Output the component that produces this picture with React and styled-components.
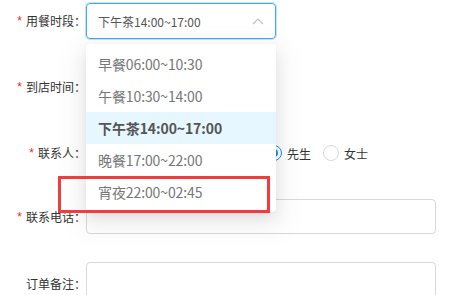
import React from 'react';
import styled, { createGlobalStyle } from 'styled-components';

const GlobalStyle = createGlobalStyle`
  html, body {
    margin: 0;
    padding: 0;
    background: #fff;
    font-family: "Noto Sans CJK SC", "Noto Sans", sans-serif;
  }
`;

const Page = styled.div`
  position: relative;
  width: 455px;
  height: 295px;
  overflow: hidden;
  padding-top: 3px;
  box-sizing: border-box;
`;

const Row = styled.div`
  display: flex;
  align-items: ${(p) => (p.$top ? 'flex-start' : 'center')};
  height: ${(p) => p.$h || 36}px;
  margin-bottom: ${(p) => (p.$mb != null ? p.$mb : 30)}px;
`;

const Label = styled.label`
  width: 86px;
  flex: none;
  display: flex;
  justify-content: flex-end;
  align-items: center;
  font-size: 12px;
  line-height: 16px;
  color: #333;
  padding-top: ${(p) => p.$pt || 0}px;
`;

const Star = styled.span`
  color: #f5222d;
  font-family: SimSun, "Liberation Sans", sans-serif;
  font-size: 12px;
  margin-right: 4px;
`;

const SelectWrap = styled.div`
  position: relative;
  width: 190px;
  height: 36px;
`;

const SelectBox = styled.div`
  box-sizing: border-box;
  height: 36px;
  border: 1px solid #40a9ff;
  border-radius: 4px;
  box-shadow: 0 0 0 1px rgba(24, 144, 255, 0.25);
  display: flex;
  align-items: center;
  justify-content: space-between;
  padding: 0 11px;
  font-size: 12px;
  color: #555;
`;

const Dropdown = styled.ul`
  position: absolute;
  top: 41px;
  left: 0;
  width: 190px;
  margin: 0;
  padding: 4px 0;
  list-style: none;
  background: #fff;
  border-radius: 4px;
  box-shadow: 0 3px 6px -4px rgba(0, 0, 0, 0.12), 0 6px 16px 0 rgba(0, 0, 0, 0.08),
    0 9px 28px 8px rgba(0, 0, 0, 0.05);
  z-index: 5;
`;

const Option = styled.li`
  height: 32px;
  line-height: 32px;
  padding: 0 12px;
  font-size: 14px;
  letter-spacing: -0.1px;
  color: ${(p) => (p.$active ? '#555' : '#777')};
  font-weight: ${(p) => (p.$active ? 600 : 400)};
  background: ${(p) => (p.$active ? '#e6f7ff' : 'transparent')};
  white-space: nowrap;
`;

const Input = styled.div`
  box-sizing: border-box;
  width: ${(p) => p.$w || 350}px;
  height: ${(p) => p.$h || 35}px;
  border: 1px solid #d9d9d9;
  border-radius: 4px;
  background: #fff;
`;

const RadioGroup = styled.div`
  display: flex;
  align-items: center;
  gap: 12px;
  margin-left: 4px;
`;

const Radio = styled.span`
  display: flex;
  align-items: center;
  gap: 5px;
  font-size: 12px;
  color: #333;
`;

const Circle = styled.span`
  box-sizing: border-box;
  width: 16px;
  height: 16px;
  border-radius: 50%;
  border: 1px solid ${(p) => (p.$on ? '#1890ff' : '#d9d9d9')};
  display: flex;
  align-items: center;
  justify-content: center;
  &::after {
    content: '';
    width: 8px;
    height: 8px;
    border-radius: 50%;
    background: ${(p) => (p.$on ? '#1890ff' : 'transparent')};
  }
`;

const Highlight = styled.div`
  position: absolute;
  left: 58px;
  top: 176px;
  width: 212px;
  height: 37px;
  box-sizing: border-box;
  border: 3px solid #f03c3c;
  z-index: 10;
`;

const options = [
  '早餐06:00~10:30',
  '午餐10:30~14:00',
  '下午茶14:00~17:00',
  '晚餐17:00~22:00',
  '宵夜22:00~02:45',
];

const Chevron = () => (
  <svg width="12" height="8" viewBox="0 0 12 8" fill="none">
    <path d="M1 7L6 2L11 7" stroke="#bfbfbf" strokeWidth="1.1" />
  </svg>
);

export default function App() {
  return (
    <Page>
      <GlobalStyle />
      <Row>
        <Label><Star>*</Star>用餐时段：</Label>
        <SelectWrap>
          <SelectBox>
            <span>下午茶14:00~17:00</span>
            <Chevron />
          </SelectBox>
          <Dropdown>
            {options.map((o, i) => (
              <Option key={o} $active={i === 2}>{o}</Option>
            ))}
          </Dropdown>
        </SelectWrap>
      </Row>
      <Row>
        <Label><Star>*</Star>到店时间：</Label>
        <Input $w={190} $h={36} />
      </Row>
      <Row $mb={28}>
        <Label><Star>*</Star>联系人：</Label>
        <Input $w={176} $h={34} />
        <RadioGroup>
          <Radio><Circle $on />先生</Radio>
          <Radio><Circle />女士</Radio>
        </RadioGroup>
      </Row>
      <Row $h={35} $mb={28}>
        <Label><Star>*</Star>联系电话：</Label>
        <Input />
      </Row>
      <Row $h={60} $top>
        <Label $pt={14}>订单备注：</Label>
        <Input $h={60} />
      </Row>
      <Highlight />
    </Page>
  );
}
